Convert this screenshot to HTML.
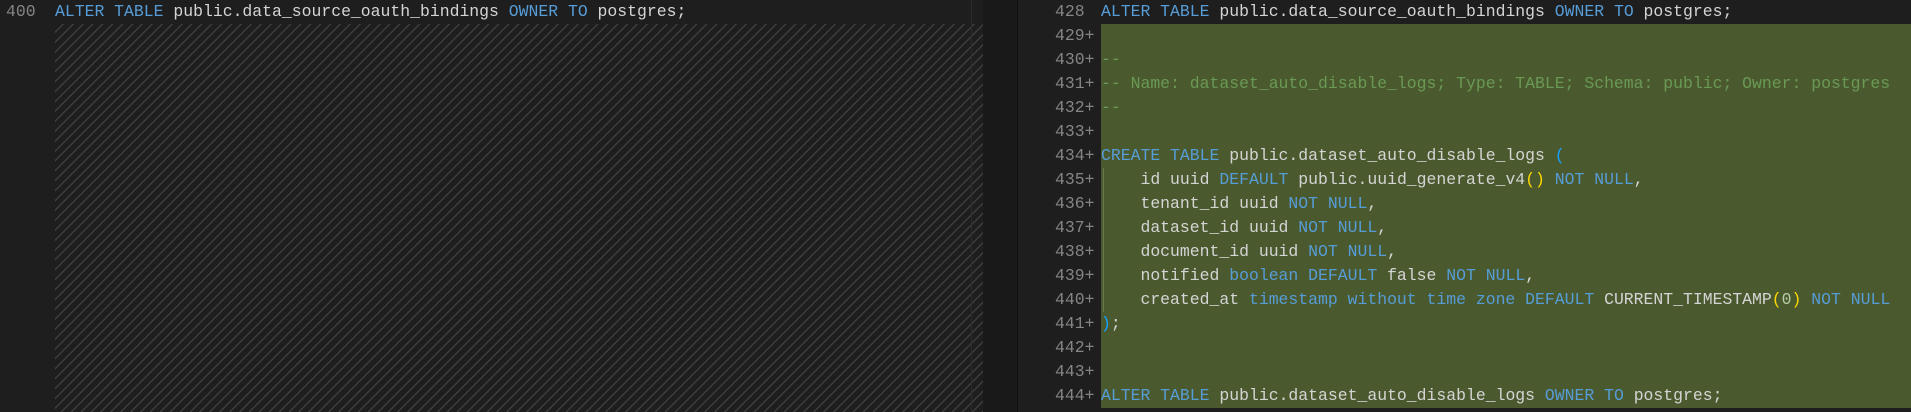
<!DOCTYPE html>
<html><head><meta charset="utf-8"><style>
body{margin:0;width:1911px;height:412px;background:#1e1e1e;overflow:hidden;position:relative;font-family:"Liberation Mono",monospace;font-size:16.45px;}
.ln{position:absolute;color:#858585;height:24px;line-height:24px;white-space:pre;}
.code{position:absolute;height:24px;line-height:24px;white-space:pre;color:#d4d4d4;}
.k{color:#569cd6}.c{color:#6a9955}.y{color:#ffd700}.n{color:#b5cea8}.p{color:#179fff}
.hatch{position:absolute;left:55px;top:24px;width:928px;height:388px;background:repeating-linear-gradient(-45deg,#3d3d3d 0 1.4px,transparent 1.4px 7px);}
</style></head><body>
<div class="ln" style="left:6px;top:0">400</div>
<div class="code" style="left:55px;top:0"><span class="k">ALTER TABLE</span> public.data_source_oauth_bindings <span class="k">OWNER TO</span> postgres;</div>
<div class="hatch"></div>
<div style="position:absolute;left:971px;top:0;width:1px;height:412px;background:#2b2b2b"></div>
<div style="position:absolute;left:983px;top:0;width:35px;height:412px;background:#191919"></div>
<div style="position:absolute;left:1017px;top:0;width:1px;height:412px;background:#111"></div>
<div style="position:absolute;left:1101px;top:24px;width:810px;height:384px;background:#4b5a2e"></div>
<div style="position:absolute;left:1103px;top:168px;width:1px;height:144px;background:#6b7a4e"></div>

<div class="ln" style="left:1055px;top:0">428</div>
<div class="ln" style="left:1055px;top:24px">429+</div>
<div class="ln" style="left:1055px;top:48px">430+</div>
<div class="ln" style="left:1055px;top:72px">431+</div>
<div class="ln" style="left:1055px;top:96px">432+</div>
<div class="ln" style="left:1055px;top:120px">433+</div>
<div class="ln" style="left:1055px;top:144px">434+</div>
<div class="ln" style="left:1055px;top:168px">435+</div>
<div class="ln" style="left:1055px;top:192px">436+</div>
<div class="ln" style="left:1055px;top:216px">437+</div>
<div class="ln" style="left:1055px;top:240px">438+</div>
<div class="ln" style="left:1055px;top:264px">439+</div>
<div class="ln" style="left:1055px;top:288px">440+</div>
<div class="ln" style="left:1055px;top:312px">441+</div>
<div class="ln" style="left:1055px;top:336px">442+</div>
<div class="ln" style="left:1055px;top:360px">443+</div>
<div class="ln" style="left:1055px;top:384px">444+</div>

<div class="code" style="left:1101px;top:0"><span class="k">ALTER TABLE</span> public.data_source_oauth_bindings <span class="k">OWNER TO</span> postgres;</div>
<div class="code c" style="left:1101px;top:48px">--</div>
<div class="code c" style="left:1101px;top:72px">-- Name: dataset_auto_disable_logs; Type: TABLE; Schema: public; Owner: postgres</div>
<div class="code c" style="left:1101px;top:96px">--</div>
<div class="code" style="left:1101px;top:144px"><span class="k">CREATE TABLE</span> public.dataset_auto_disable_logs <span class="p">(</span></div>
<div class="code" style="left:1101px;top:168px">    id uuid <span class="k">DEFAULT</span> public.uuid_generate_v4<span class="y">()</span> <span class="k">NOT NULL</span>,</div>
<div class="code" style="left:1101px;top:192px">    tenant_id uuid <span class="k">NOT NULL</span>,</div>
<div class="code" style="left:1101px;top:216px">    dataset_id uuid <span class="k">NOT NULL</span>,</div>
<div class="code" style="left:1101px;top:240px">    document_id uuid <span class="k">NOT NULL</span>,</div>
<div class="code" style="left:1101px;top:264px">    notified <span class="k">boolean DEFAULT</span> false <span class="k">NOT NULL</span>,</div>
<div class="code" style="left:1101px;top:288px">    created_at <span class="k">timestamp without time zone DEFAULT</span> CURRENT_TIMESTAMP<span class="y">(</span><span class="n">0</span><span class="y">)</span> <span class="k">NOT NULL</span></div>
<div class="code" style="left:1101px;top:312px"><span class="p">)</span>;</div>
<div class="code" style="left:1101px;top:384px"><span class="k">ALTER TABLE</span> public.dataset_auto_disable_logs <span class="k">OWNER TO</span> postgres;</div>
</body></html>
